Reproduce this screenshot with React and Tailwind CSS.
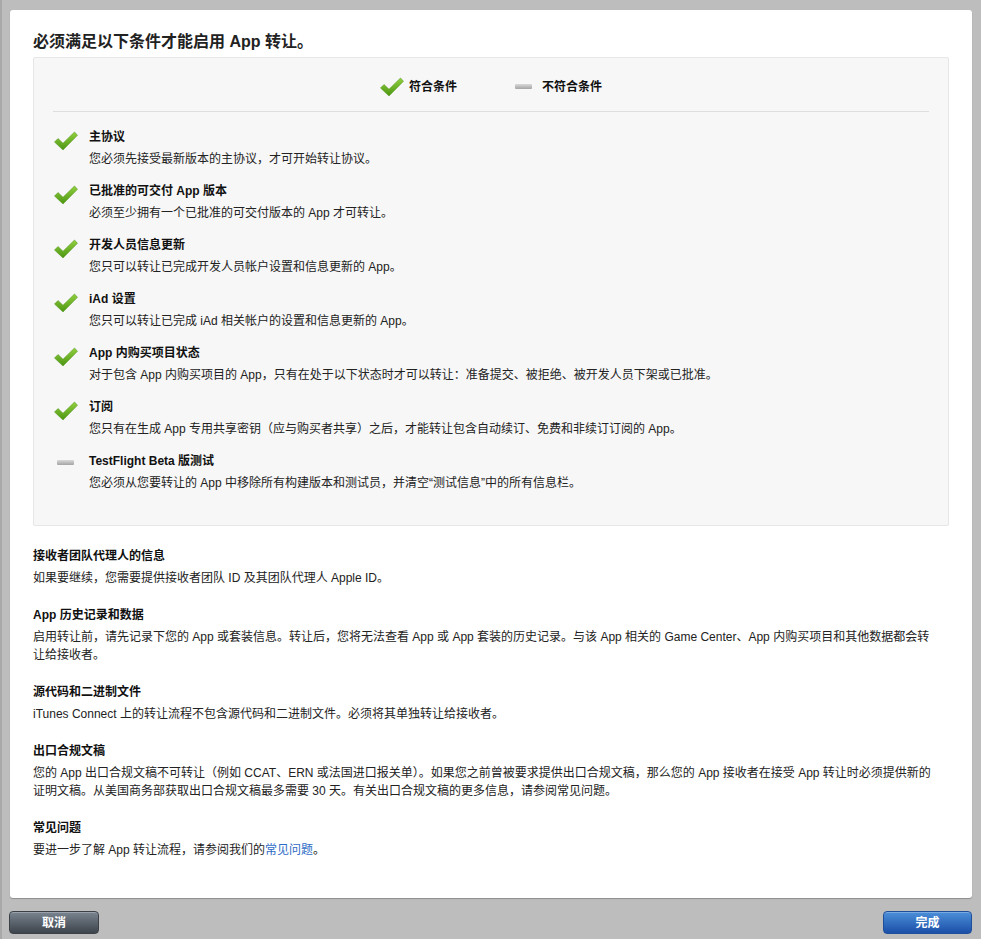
import React from "react";

function Check() {
  return (
    <svg width="24" height="21" viewBox="0 0 24 21">
      <defs>
        <linearGradient id="chk" x1="0" y1="0" x2="0" y2="1">
          <stop offset="0" stopColor="#92d03f" />
          <stop offset="1" stopColor="#4c9612" />
        </linearGradient>
      </defs>
      <path
        d="M0.5 12 L4 8.5 L9 13.2 L20.5 2 L23.5 5.3 L9 20 Z"
        fill="url(#chk)"
        stroke="#4d9117"
        strokeWidth="0.5"
        strokeLinejoin="round"
      />
    </svg>
  );
}

function Dash() {
  return (
    <div className="w-[17px] h-[5px] bg-gradient-to-b from-[#dadada] to-[#a4a4a4] rounded-[1px]" />
  );
}

const items = [
  { ok: true, title: "主协议", desc: "您必须先接受最新版本的主协议，才可开始转让协议。" },
  { ok: true, title: "已批准的可交付 App 版本", desc: "必须至少拥有一个已批准的可交付版本的 App 才可转让。" },
  { ok: true, title: "开发人员信息更新", desc: "您只可以转让已完成开发人员帐户设置和信息更新的 App。" },
  { ok: true, title: "iAd 设置", desc: "您只可以转让已完成 iAd 相关帐户的设置和信息更新的 App。" },
  { ok: true, title: "App 内购买项目状态", desc: "对于包含 App 内购买项目的 App，只有在处于以下状态时才可以转让：准备提交、被拒绝、被开发人员下架或已批准。" },
  { ok: true, title: "订阅", desc: "您只有在生成 App 专用共享密钥（应与购买者共享）之后，才能转让包含自动续订、免费和非续订订阅的 App。" },
  { ok: false, title: "TestFlight Beta 版测试", desc: "您必须从您要转让的 App 中移除所有构建版本和测试员，并清空“测试信息”中的所有信息栏。" },
];

function Section({ title, children }) {
  return (
    <div className="mt-[19px] first:mt-0">
      <div className="font-bold text-[12px] leading-[18px] text-[#111]">{title}</div>
      <div className="mt-[4px] w-[905px] text-[12px] leading-[18px] text-[#222]">{children}</div>
    </div>
  );
}

export default function App() {
  return (
    <div
      className="w-[981px] h-[939px] bg-[#bdbdbd] border-l-2 border-[#a9a9a9] flex flex-col"
      style={{ fontFamily: '"Liberation Sans", "Noto Sans CJK SC", sans-serif' }}
    >
      <div className="ml-[8px] mt-[10px] w-[962px] h-[888px] bg-white rounded-[3px] shadow-[0_1px_1px_rgba(0,0,0,0.25)] px-[23px] pt-[22px]">
        <h1 className="text-[16px] font-bold leading-[20px] text-[#222]">
          必须满足以下条件才能启用 App 转让。
        </h1>
        <div className="mt-[5px] h-[469px] bg-[#f7f7f7] border border-[#e6e6e6] rounded-[2px] px-[19px]">
          <div className="flex items-center justify-center h-[54px] pt-[4px] border-b border-[#dedede] gap-[58px]">
            <div className="flex items-center gap-[5px]">
              <Check />
              <span className="text-[12px] font-bold text-[#111]">符合条件</span>
            </div>
            <div className="flex items-center gap-[10px]">
              <Dash />
              <span className="text-[12px] font-bold text-[#111]">不符合条件</span>
            </div>
          </div>
          <div className="pt-[16px] flex flex-col gap-[14px]">
            {items.map((it) => (
              <div key={it.title} className="flex">
                <div className="w-[36px] flex justify-start pl-[1px] pt-[2px] shrink-0">
                  {it.ok ? <Check /> : <div className="mt-[6px] ml-[3px]"><Dash /></div>}
                </div>
                <div>
                  <div className="font-bold text-[12px] leading-[18px] text-[#111]">{it.title}</div>
                  <div className="mt-[4px] text-[12px] leading-[18px] text-[#222]">{it.desc}</div>
                </div>
              </div>
            ))}
          </div>
        </div>
        <div className="mt-[21px] flex flex-col">
          <Section title="接收者团队代理人的信息">
            如果要继续，您需要提供接收者团队 ID 及其团队代理人 Apple ID。
          </Section>
          <Section title="App 历史记录和数据">
            启用转让前，请先记录下您的 App 或套装信息。转让后，您将无法查看 App 或 App 套装的历史记录。与该 App 相关的 Game Center、App 内购买项目和其他数据都会转让给接收者。
          </Section>
          <Section title="源代码和二进制文件">
            iTunes Connect 上的转让流程不包含源代码和二进制文件。必须将其单独转让给接收者。
          </Section>
          <Section title="出口合规文稿">
            您的 App 出口合规文稿不可转让（例如 CCAT、ERN 或法国进口报关单）。如果您之前曾被要求提供出口合规文稿，那么您的 App 接收者在接受 App 转让时必须提供新的证明文稿。从美国商务部获取出口合规文稿最多需要 30 天。有关出口合规文稿的更多信息，请参阅常见问题。
          </Section>
          <Section title="常见问题">
            要进一步了解 App 转让流程，请参阅我们的<span className="text-[#2e6bc6]">常见问题</span>。
          </Section>
        </div>
      </div>
      <div className="flex justify-between mt-[13px] pl-[7px] pr-[9px]">
        <button className="w-[90px] h-[23px] rounded-[4px] border border-[#3c4148] bg-gradient-to-b from-[#7a8591] to-[#3e444b] text-white text-[12px] font-bold shadow-[inset_0_1px_0_rgba(255,255,255,0.25)]">
          取消
        </button>
        <button className="w-[89px] h-[23px] rounded-[4px] border border-[#1f4f9a] bg-gradient-to-b from-[#4d8fd8] to-[#1b4fa8] text-white text-[12px] font-bold shadow-[inset_0_1px_0_rgba(255,255,255,0.25)]">
          完成
        </button>
      </div>
    </div>
  );
}
